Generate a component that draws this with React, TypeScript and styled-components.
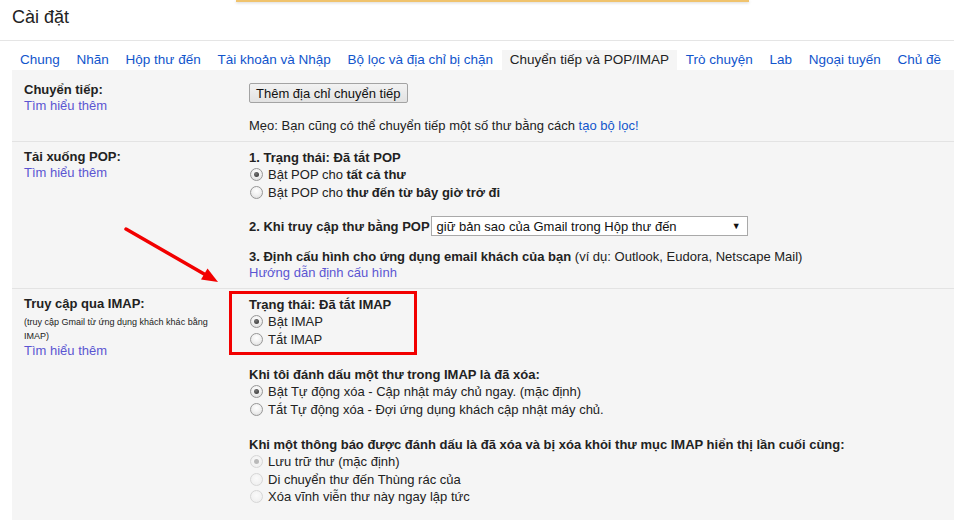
import React from 'react'
import styled, { createGlobalStyle } from 'styled-components'

const GlobalStyle = createGlobalStyle`
  html, body {
    margin: 0;
    padding: 0;
    background: #fff;
    overflow: hidden;
  }
  body {
    font-family: "Liberation Sans", Arial, sans-serif;
    font-size: 13px;
    color: #222;
  }
`

const Page = styled.div`
  position: relative;
  width: 954px;
  height: 520px;
  overflow: hidden;
`

const NoticeEdge = styled.div`
  position: absolute;
  left: 236px;
  top: 0;
  width: 513px;
  height: 2px;
  background: #f0c36d;
  box-shadow: 0 1px 3px rgba(0, 0, 0, 0.18);
`

const Header = styled.div`
  height: 33px;
  padding: 7px 12px 0;
  border-bottom: 1px solid #e5e5e5;
  font-size: 18px;
  line-height: 21px;
  color: #222;
`

const TabBar = styled.div`
  display: flex;
  margin-top: 9px;
  padding-left: 12px;
  gap: 0.75px;
`

const Tab = styled.div<{ $active?: boolean }>`
  padding: 0 8px;
  height: 20px;
  line-height: 20px;
  font-size: 13.5px;
  white-space: nowrap;
  color: ${p => (p.$active ? '#222' : '#15c')};
  background: ${p => (p.$active ? '#f5f5f5' : 'transparent')};
  cursor: pointer;
`

const Panel = styled.div`
  margin-left: 12px;
  background: #f5f5f5;
  min-height: 450px;
`

const Row = styled.div<{ $first?: boolean; $last?: boolean }>`
  position: relative;
  display: grid;
  grid-template-columns: 237px 1fr;
  padding: ${p => (p.$first ? '12px' : '7px')} 0 7px;
  border-bottom: ${p => (p.$last ? 'none' : '1px solid #e3e3e3')};
`

const Side = styled.div`
  padding-left: 12px;
  line-height: 16px;
`

const SideTitle = styled.div`
  font-weight: bold;
`

const SideNote = styled.div`
  max-width: 195px;
  margin-top: 3px;
  font-size: 9px;
  line-height: 14px;
`

const Link = styled.a<{ $visited?: boolean }>`
  color: ${p => (p.$visited ? '#5b55d2' : '#15c')};
  text-decoration: none;
  cursor: pointer;
`

const Main = styled.div`
  line-height: 17px;
`

const Group = styled.div<{ $gap?: number; $lh?: number }>`
  margin-top: ${p => p.$gap ?? 0}px;
  line-height: ${p => p.$lh ?? 17}px;
`

const Heading = styled.div`
  font-weight: bold;
`

const Button = styled.button`
  display: block;
  margin-top: 1px;
  height: 20px;
  padding: 0 6px;
  border: 1px solid #a3a3a3;
  border-radius: 2px;
  background: linear-gradient(#f2f2f2, #e2e2e2);
  font-family: "Liberation Sans", Arial, sans-serif;
  font-size: 13px;
  color: #111;
`

const Tip = styled.div`
  margin-top: 14px;
`

const RadioRow = styled.label`
  display: flex;
  align-items: center;
  height: 17.5px;
  padding-left: 1px;
  white-space: nowrap;
`

const Radio = styled.span<{ $checked?: boolean; $disabled?: boolean }>`
  display: flex;
  align-items: center;
  justify-content: center;
  flex: none;
  box-sizing: border-box;
  width: 13px;
  height: 13px;
  margin-right: 5px;
  border-radius: 50%;
  border: 1px solid ${p => (p.$disabled ? '#d6d6d6' : '#979797')};
  background: ${p =>
    p.$disabled
      ? 'radial-gradient(circle at 50% 40%, #fafafa 0%, #ececec 100%)'
      : 'radial-gradient(circle at 50% 35%, #ffffff 0%, #f0f0f0 50%, #d6d6d6 100%)'};

  &::after {
    content: '';
    display: ${p => (p.$checked ? 'block' : 'none')};
    width: 5px;
    height: 5px;
    border-radius: 50%;
    background: ${p => (p.$disabled ? '#b9b9b9' : 'radial-gradient(circle at 40% 35%, #777, #2c2c2c)')};
  }
`

const InlineRow = styled.div`
  display: flex;
  align-items: center;
  height: 20px;
`

const Select = styled.div`
  display: flex;
  align-items: center;
  justify-content: space-between;
  box-sizing: border-box;
  width: 317px;
  height: 20px;
  margin-left: 1px;
  padding: 0 6px 0 5px;
  border: 1px solid #a9a9a9;
  background: #fff;
  font-weight: normal;
  color: #111;
`

const Caret = styled.span`
  font-size: 9px;
  color: #111;
`

const Highlight = styled.div`
  position: absolute;
  left: 217px;
  top: 2px;
  width: 188px;
  height: 64px;
  box-sizing: border-box;
  border: 3px solid #f20000;
  pointer-events: none;
`

const ArrowMark = styled.svg`
  position: absolute;
  left: 120px;
  top: 222px;
  pointer-events: none;
`

type Opt = { text: React.ReactNode; checked?: boolean; disabled?: boolean }

const RadioList = ({ options }: { options: Opt[] }) => (
  <>
    {options.map((o, i) => (
      <RadioRow key={i}>
        <Radio $checked={o.checked} $disabled={o.disabled} />
        <span>{o.text}</span>
      </RadioRow>
    ))}
  </>
)

const tabs = [
  'Chung',
  'Nhãn',
  'Hộp thư đến',
  'Tài khoản và Nhập',
  'Bộ lọc và địa chỉ bị chặn',
  'Chuyển tiếp và POP/IMAP',
  'Trò chuyện',
  'Lab',
  'Ngoại tuyến',
  'Chủ đề',
]

const App = () => {
  return (
    <>
      <GlobalStyle />
      <Page>
        <NoticeEdge />
        <Header>Cài đặt</Header>
        <TabBar>
          {tabs.map(t => (
            <Tab key={t} $active={t === 'Chuyển tiếp và POP/IMAP'}>
              {t}
            </Tab>
          ))}
        </TabBar>

        <Panel>
          <Row $first>
            <Side>
              <SideTitle>Chuyển tiếp:</SideTitle>
              <Link $visited>Tìm hiểu thêm</Link>
            </Side>
            <Main>
              <Button>Thêm địa chỉ chuyển tiếp</Button>
              <Tip>
                Mẹo: Bạn cũng có thể chuyển tiếp một số thư bằng cách <Link>tạo bộ lọc!</Link>
              </Tip>
            </Main>
          </Row>

          <Row>
            <Side>
              <SideTitle>Tải xuống POP:</SideTitle>
              <Link $visited>Tìm hiểu thêm</Link>
            </Side>
            <Main>
              <Group>
                <Heading>1. Trạng thái: Đã tắt POP</Heading>
                <RadioList
                  options={[
                    { text: <>Bật POP cho <b>tất cả thư</b></>, checked: true },
                    { text: <>Bật POP cho <b>thư đến từ bây giờ trở đi</b></> },
                  ]}
                />
              </Group>
              <Group $gap={15}>
                <InlineRow>
                  <Heading>2. Khi truy cập thư bằng POP</Heading>
                  <Select>
                    <span>giữ bản sao của Gmail trong Hộp thư đến</span>
                    <Caret>▼</Caret>
                  </Select>
                </InlineRow>
              </Group>
              <Group $gap={13} $lh={16}>
                <div>
                  <b>3. Định cấu hình cho ứng dụng email khách của bạn</b> (ví dụ: Outlook, Eudora, Netscape Mail)
                </div>
                <Link $visited>Hướng dẫn định cấu hình</Link>
              </Group>
            </Main>
          </Row>

          <Row $last>
            <Side>
              <SideTitle>Truy cập qua IMAP:</SideTitle>
              <SideNote>(truy cập Gmail từ ứng dụng khách khác bằng IMAP)</SideNote>
              <Link $visited>Tìm hiểu thêm</Link>
            </Side>
            <Main>
              <Group>
                <Heading>Trạng thái: Đã tắt IMAP</Heading>
                <RadioList options={[{ text: 'Bật IMAP', checked: true }, { text: 'Tắt IMAP' }]} />
              </Group>
              <Group $gap={18}>
                <Heading>Khi tôi đánh dấu một thư trong IMAP là đã xóa:</Heading>
                <RadioList
                  options={[
                    { text: 'Bật Tự động xóa - Cập nhật máy chủ ngay. (mặc định)', checked: true },
                    { text: 'Tắt Tự động xóa - Đợi ứng dụng khách cập nhật máy chủ.' },
                  ]}
                />
              </Group>
              <Group $gap={18}>
                <Heading>
                  Khi một thông báo được đánh dấu là đã xóa và bị xóa khỏi thư mục IMAP hiển thị lần cuối cùng:
                </Heading>
                <RadioList
                  options={[
                    { text: 'Lưu trữ thư (mặc định)', checked: true, disabled: true },
                    { text: 'Di chuyển thư đến Thùng rác của', disabled: true },
                    { text: 'Xóa vĩnh viễn thư này ngay lập tức', disabled: true },
                  ]}
                />
              </Group>
            </Main>
            <Highlight />
          </Row>
        </Panel>

        <ArrowMark width="104" height="66" viewBox="120 222 104 66">
          <line x1="126" y1="229" x2="205" y2="274.5" stroke="#f20000" strokeWidth="3.5" strokeLinecap="round" />
          <polygon points="218,282 201,279.5 207.5,268.5" fill="#f20000" />
        </ArrowMark>
      </Page>
    </>
  )
}

export default App
